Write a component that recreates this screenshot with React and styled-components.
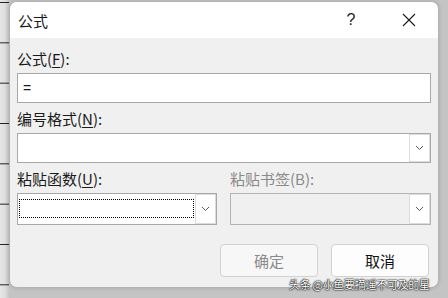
import React from 'react';
import styled, { createGlobalStyle } from 'styled-components';

const GlobalStyle = createGlobalStyle`
  html, body {
    margin: 0;
    padding: 0;
    background: #c4c4c4;
  }
  * {
    box-sizing: border-box;
  }
`;

const Page = styled.div`
  position: relative;
  width: 448px;
  height: 298px;
  overflow: hidden;
  display: flex;
  align-items: flex-start;
  background: #c4c4c4;
  font-family: "Noto Sans CJK SC", "Noto Sans", sans-serif;
`;

const SheetEdge = styled.div`
  width: 9px;
  height: 100%;
  flex-shrink: 0;
  background:
    repeating-linear-gradient(to bottom, transparent 0, transparent 39.8px, #222 39.8px, #222 40.8px) 0 3px / 100% 40.33px,
    linear-gradient(to right, #e6e6e6 0, #dedede 5px, #c6c6c6 9px);
`;

const Dialog = styled.div`
  width: 430px;
  height: 287px;
  margin-top: 1px;
  display: flex;
  flex-direction: column;
  border: 1px solid #b4b4b4;
  border-radius: 8px;
  overflow: hidden;
  background: #f0f0f0;
  box-shadow: 0 0 4px rgba(0, 0, 0, 0.15);
`;

const TitleBar = styled.div`
  height: 36px;
  display: flex;
  align-items: center;
  background: #ffffff;
  padding-left: 8px;
`;

const Title = styled.span`
  flex: 1;
  font-size: 15px;
  color: #1a1a1a;
`;

const TitleButton = styled.div`
  width: 58px;
  height: 36px;
  display: flex;
  align-items: center;
  justify-content: center;
  font-family: "Liberation Sans", sans-serif;
  font-size: 16px;
  color: #222;
`;

const Body = styled.div`
  flex: 1;
  display: flex;
  flex-direction: column;
  padding: 11px 7px 10px 7px;
`;

const Field = styled.div`
  display: flex;
  flex-direction: column;
  gap: 4px;
  margin-top: ${p => (p.$first ? 0 : 6)}px;
  min-width: 0;
`;

const Label = styled.label`
  height: 20px;
  line-height: 20px;
  font-size: 15px;
  color: ${p => (p.$disabled ? '#8a8a8a' : '#1a1a1a')};
  white-space: nowrap;

  u {
    text-decoration: underline;
    text-underline-offset: 2px;
  }
`;

const TextBox = styled.div`
  height: 30px;
  display: flex;
  align-items: center;
  padding-left: 5px;
  background: #ffffff;
  border: 1px solid #a8a8a8;
  font-family: "Liberation Sans", sans-serif;
  font-size: 14px;
  color: #1a1a1a;
`;

const Combo = styled.div`
  height: ${p => p.$h || 30}px;
  display: flex;
  border: 1px solid ${p => (p.$disabled ? '#b4b4b4' : '#a8a8a8')};
  background: ${p => (p.$disabled ? '#f0f0f0' : '#ffffff')};
`;

const ComboField = styled.div`
  flex: 1;
  display: flex;
  padding: 5px 1px 6px 1px;
`;

const FocusRing = styled.div`
  flex: 1;
  border: 1px dotted ${p => (p.$on ? '#000' : 'transparent')};
`;

const DropButton = styled.div`
  width: 21px;
  display: flex;
  align-items: center;
  justify-content: center;
  background: #ffffff;
  border: 1px solid #dcdcdc;
`;

const Columns = styled.div`
  display: grid;
  grid-template-columns: 200px 1fr;
  column-gap: 13px;
`;

const ButtonRow = styled.div`
  display: flex;
  justify-content: flex-end;
  gap: 13px;
  margin-top: 19px;
  padding-right: 2px;
`;

const Button = styled.div`
  width: 98px;
  height: 33px;
  display: flex;
  align-items: center;
  justify-content: center;
  border: 1px solid #d2d2d2;
  border-radius: 4px;
  background: ${p => (p.$disabled ? '#f7f7f7' : '#fdfdfd')};
  font-size: 15px;
  color: ${p => (p.$disabled ? '#8a8a8a' : '#111')};
`;

const Watermark = styled.div`
  position: absolute;
  left: 289px;
  top: 276px;
  font-size: 11px;
  letter-spacing: -0.3px;
  color: #ffffff;
  white-space: nowrap;
  text-shadow: 0 0 1px #000, 0 0 2px #000, 0 0 1px #000;
`;

const Chevron = () => (
  <svg width="9" height="6" viewBox="0 0 9 6">
    <polyline points="1,1 4.5,4.5 8,1" fill="none" stroke="#5a5a5a" strokeWidth="1" />
  </svg>
);

const CloseIcon = () => (
  <svg width="14" height="14" viewBox="0 0 14 14">
    <path d="M1 1 L13 13 M13 1 L1 13" stroke="#1a1a1a" strokeWidth="1.1" />
  </svg>
);

const Dropdown = ({ height, focused, disabled }) => (
  <Combo $h={height} $disabled={disabled}>
    <ComboField>
      <FocusRing $on={focused} />
    </ComboField>
    <DropButton>
      <Chevron />
    </DropButton>
  </Combo>
);

const App = () => (
  <>
    <GlobalStyle />
    <Page>
      <SheetEdge />
      <Dialog>
        <TitleBar>
          <Title>公式</Title>
          <TitleButton>?</TitleButton>
          <TitleButton>
            <CloseIcon />
          </TitleButton>
        </TitleBar>
        <Body>
          <Field $first>
            <Label>公式(<u>F</u>):</Label>
            <TextBox>=</TextBox>
          </Field>
          <Field>
            <Label>编号格式(<u>N</u>):</Label>
            <Dropdown height={30} />
          </Field>
          <Columns>
            <Field>
              <Label>粘贴函数(<u>U</u>):</Label>
              <Dropdown height={32} focused />
            </Field>
            <Field>
              <Label $disabled>粘贴书签(B):</Label>
              <Dropdown height={32} disabled />
            </Field>
          </Columns>
          <ButtonRow>
            <Button $disabled>确定</Button>
            <Button>取消</Button>
          </ButtonRow>
        </Body>
      </Dialog>
      <Watermark>头条 @小鱼要摘遥不可及的星</Watermark>
    </Page>
  </>
);

export default App;
